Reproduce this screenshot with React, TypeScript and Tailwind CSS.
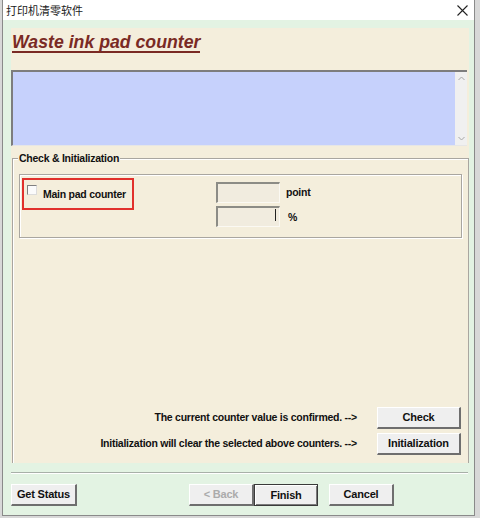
import React from 'react';

const font = { fontFamily: '"Liberation Sans", Arial, sans-serif' };

const Btn: React.FC<{ label: string; w: string; disabled?: boolean; primary?: boolean }> = ({ label, w, disabled, primary }) => (
  <button
    className={`${w} h-[22px] flex items-center justify-center text-[11px] font-bold tracking-[-0.2px] bg-[#efefef] ${
      primary
        ? 'border border-[#3a3a3a] shadow-[inset_1px_1px_0_#ffffff,inset_-1px_-1px_0_#7a7a7a]'
        : 'border-t border-l border-t-white border-l-white border-b-2 border-r-2 border-b-[#6e6e6e] border-r-[#6e6e6e]'
    } ${disabled ? 'text-[#ababab]' : 'text-[#111]'}`}
  >
    {label}
  </button>
);

const Field: React.FC<{ caret?: boolean }> = ({ caret }) => (
  <div className="relative w-[64px] h-[21px] bg-[#f1ecdf] border-t-2 border-l-2 border-t-[#8c8c86] border-l-[#8c8c86] border-b border-r border-b-[#fbf9f3] border-r-[#fbf9f3]">
    {caret && <div className="absolute right-[3px] top-[1px] w-px h-[12px] bg-[#222]" />}
  </div>
);

const label = 'text-[10.5px] font-bold tracking-[-0.25px] text-[#111] whitespace-nowrap';

export default function App() {
  return (
    <div className="w-[480px] h-[518px] bg-[#d8d8d8] overflow-hidden" style={font}>
      <div className="ml-[2px] w-[473px] h-[516px] flex flex-col border border-t-0 border-[#8a8a8a] bg-white">
        {/* title bar */}
        <div className="h-[20px] flex items-center justify-between bg-white pl-[3px] pr-[5px]">
          <span
            className="text-[11px] text-[#222] leading-none"
            style={{ fontFamily: '"Noto Sans CJK SC", "Liberation Sans", sans-serif' }}
          >
            打印机清零软件
          </span>
          <svg width="11" height="11" viewBox="0 0 11 11" className="mr-[1px]">
            <path d="M0.5 0.5L10.5 10.5M10.5 0.5L0.5 10.5" stroke="#222" strokeWidth="1.1" />
          </svg>
        </div>

        {/* client area */}
        <div className="flex-1 bg-[#e3f3e3] pt-[8px] pl-[8px] pr-[5px] flex flex-col">
          <div className="h-[435px] bg-[#f4eedc] flex flex-col">
            {/* heading */}
            <div className="h-[42px] pl-[1px] pt-[3px]">
              <span className="inline-block text-[17.7px] font-bold italic text-[#7a2a24] leading-[18px] border-b-2 border-[#7a2a24]">
                Waste ink pad counter
              </span>
            </div>

            {/* log area */}
            <div className="h-[76px] mr-[2px] flex bg-[#c6d1fc] border-t-2 border-l-2 border-t-[#7d7d7d] border-l-[#7d7d7d] border-b border-b-[#e6e6e6]">
              <div className="flex-1" />
              <div className="w-[12px] bg-[#f0f0f0] flex flex-col items-center justify-between py-[4px]">
                <svg width="7" height="5" viewBox="0 0 7 5">
                  <path d="M0.5 4L3.5 1L6.5 4" fill="none" stroke="#a6a6a6" strokeWidth="1" />
                </svg>
                <svg width="7" height="5" viewBox="0 0 7 5">
                  <path d="M0.5 1L3.5 4L6.5 1" fill="none" stroke="#a6a6a6" strokeWidth="1" />
                </svg>
              </div>
            </div>

            {/* group box */}
            <div className="flex-1 pt-[6px] flex flex-col">
              <div className="relative flex-1 ml-[1px] mt-[6px] border-t border-l border-r border-[#a9a6a0] shadow-[inset_1px_1px_0_#ffffff] flex flex-col px-[6px] pt-[15px] pb-[8px]">
                <span className={`absolute -top-[7px] left-[5px] px-[1px] bg-[#f4eedc] leading-[13px] ${label}`}>
                  Check &amp; Initialization
                </span>

                {/* counters box */}
                <div className="h-[64px] border border-[#a9a6a0] shadow-[inset_1px_1px_0_#ffffff,1px_1px_0_#ffffff] flex pt-[3px] pl-[2px]">
                  <div className="w-[112px] h-[32px] border-2 border-[#e1302c] flex items-start pt-[5px] pl-[3px]">
                    <div className="shrink-0 w-[10px] h-[10px] bg-[#fbfbfb] border-t border-l border-t-[#808080] border-l-[#808080] border-b border-r border-b-[#dcdcdc] border-r-[#dcdcdc]" />
                    <span className={`ml-[6px] mt-[3px] leading-[13px] ${label}`}>Main pad counter</span>
                  </div>
                  <div className="ml-[82px] pt-[4px] flex flex-col gap-[3px]">
                    <div className="flex items-center gap-[6px]">
                      <Field />
                      <span className={label}>point</span>
                    </div>
                    <div className="flex items-center gap-[8px]">
                      <Field caret />
                      <span className={`mt-[3px] ${label}`}>%</span>
                    </div>
                  </div>
                </div>

                <div className="flex-1" />

                {/* actions */}
                <div className="flex flex-col gap-[4px] pr-[1px]">
                  <div className="flex items-center justify-end gap-[20px]">
                    <span className={label}>The current counter value is confirmed. --&gt;</span>
                    <Btn label="Check" w="w-[84px]" />
                  </div>
                  <div className="flex items-center justify-end gap-[20px]">
                    <span className={label}>Initialization will clear the selected above counters. --&gt;</span>
                    <Btn label="Initialization" w="w-[84px]" />
                  </div>
                </div>
              </div>
            </div>
          </div>

          {/* separator */}
          <div className="mt-[9px] mr-[1px] h-[2px] border-t border-t-[#a8b0a8] border-b border-b-white" />

          {/* wizard buttons */}
          <div className="mt-[10px] flex items-center">
            <Btn label="Get Status" w="w-[66px]" />
            <div className="ml-[112px] flex">
              <Btn label="< Back" w="w-[65px]" disabled />
              <Btn label="Finish" w="w-[64px]" primary />
            </div>
            <div className="ml-[11px]">
              <Btn label="Cancel" w="w-[65px]" />
            </div>
          </div>
        </div>
      </div>
    </div>
  );
}
